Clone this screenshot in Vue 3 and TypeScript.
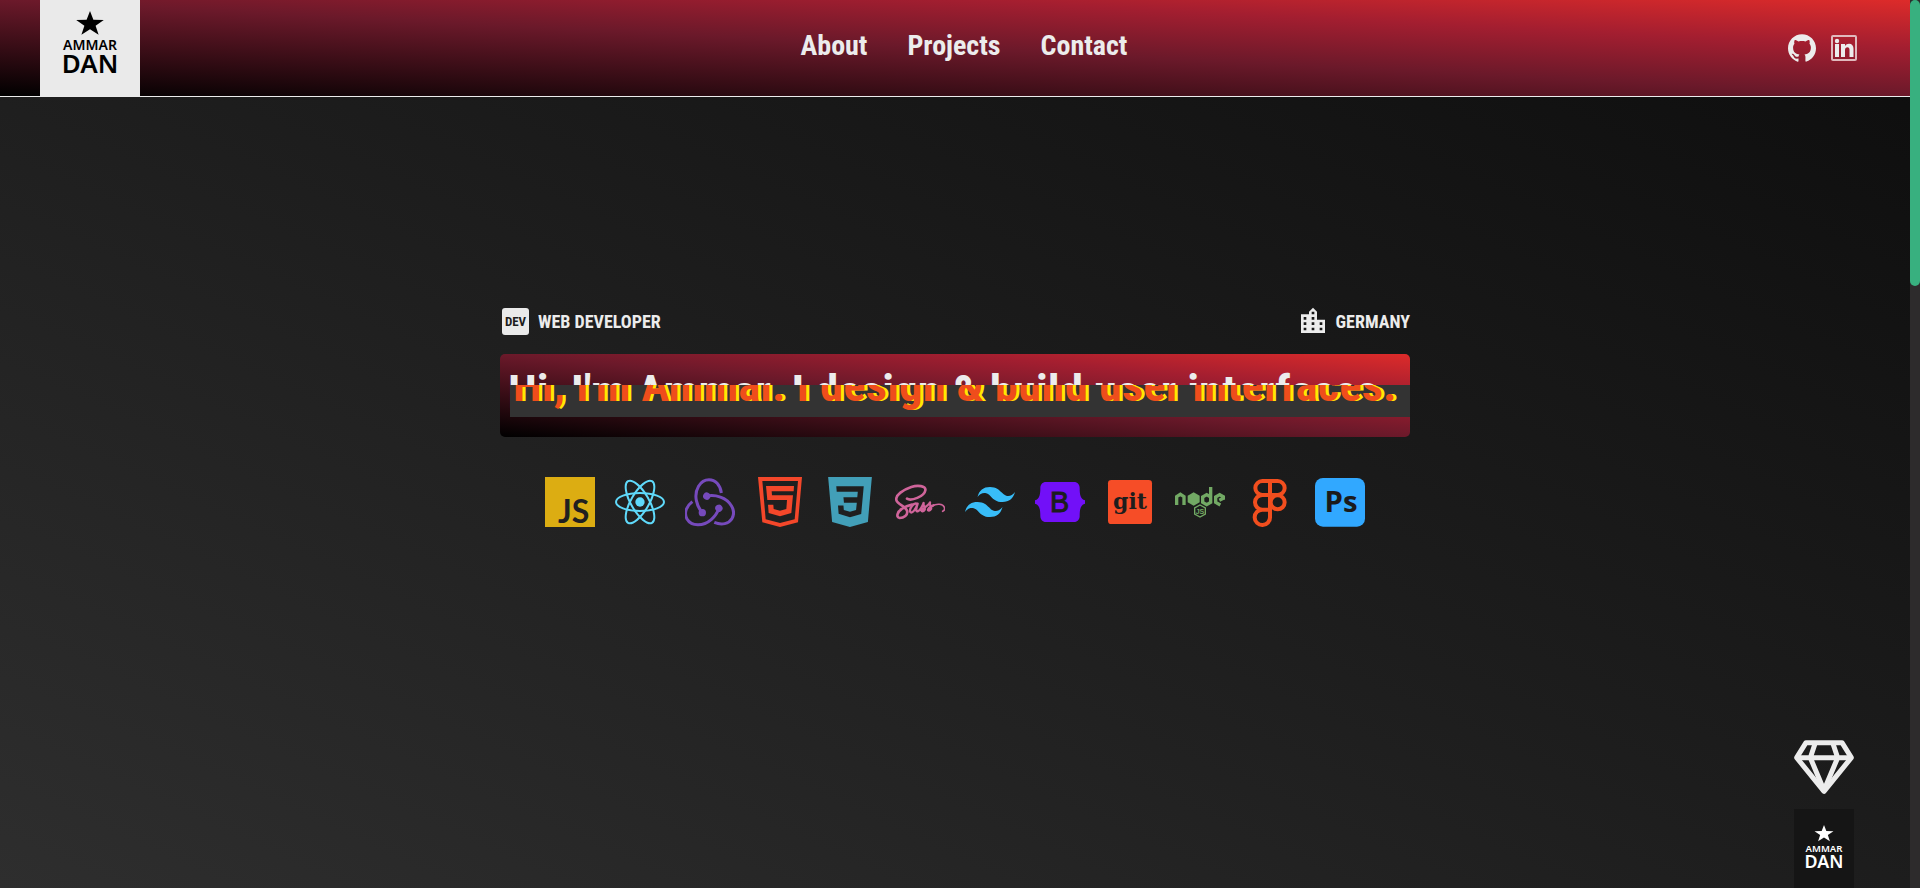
<script setup lang="ts">
import { ref } from 'vue'

interface NavLink {
  label: string
  href: string
}

const links: NavLink[] = [
  { label: 'About', href: '#about' },
  { label: 'Projects', href: '#projects' },
  { label: 'Contact', href: '#contact' },
]

const headline = ref("Hi, I'm Ammar. I design & build user interfaces.")
</script>

<template>
  <div class="page">
    <div class="view">
      <header class="bar">
        <a class="logo" href="#home" aria-label="Home">
          <svg class="logo-mark" viewBox="0 0 54 64">
            <path d="M27 0l3.400 8.800 10.400.2-8.200 5.700 3 9-8.600-5.400-8.600 5.400 3-9L13.200 9l10.400-.2z" />
            <text x="27" y="39" font-size="14">AMMAR</text>
            <text x="27" y="62" font-size="26">DAN</text>
          </svg>
        </a>
        <nav class="nav">
          <a v-for="link in links" :key="link.href" :href="link.href">{{ link.label }}</a>
        </nav>
        <div class="social">
          <a href="#github" aria-label="GitHub">
            <svg class="github" viewBox="0 0 24 24"><path d="M12 .297c-6.63 0-12 5.373-12 12 0 5.303 3.438 9.800 8.205 11.385.6.113.82-.258.82-.577 0-.285-.01-1.040-.015-2.040-3.338.724-4.042-1.610-4.042-1.610C4.422 18.070 3.633 17.700 3.633 17.700c-1.087-.744.084-.729.084-.729 1.205.084 1.838 1.236 1.838 1.236 1.070 1.835 2.809 1.305 3.495.998.108-.776.417-1.305.76-1.605-2.665-.3-5.466-1.332-5.466-5.930 0-1.310.465-2.380 1.235-3.220-.135-.303-.54-1.523.105-3.176 0 0 1.005-.322 3.300 1.230.96-.267 1.980-.399 3-.405 1.020.006 2.040.138 3 .405 2.280-1.552 3.285-1.230 3.285-1.230.645 1.653.24 2.873.12 3.176.765.84 1.230 1.910 1.230 3.220 0 4.610-2.805 5.625-5.475 5.920.42.36.81 1.096.81 2.220 0 1.606-.015 2.896-.015 3.286 0 .315.21.69.825.57C20.565 22.092 24 17.592 24 12.297c0-6.627-5.373-12-12-12" /></svg>
          </a>
          <a href="#linkedin" aria-label="LinkedIn">
            <svg class="linkedin" viewBox="0 0 26 26">
              <rect x="1" y="1" width="24" height="24" rx="1" fill="none" stroke="#e0b9bd" stroke-width="2" />
              <circle cx="6" cy="6" r="2.200" />
              <path d="M4 9h4v13H4zM10 9h4v2c1-1.500 2.300-2.200 4-2.200 3 0 4.500 2 4.500 5V22h-4v-7.200c0-1.700-.7-2.600-2-2.600-1.500 0-2.500 1-2.500 2.700V22h-4z" />
            </svg>
          </a>
        </div>
      </header>

      <main class="hero">
        <div class="intro">
          <div class="meta">
            <span class="tag"><span class="dev" aria-hidden="true">DEV</span>WEB DEVELOPER</span>
            <span class="tag place">
              <svg class="city" viewBox="0 0 24 24" aria-hidden="true"><path d="M15 11V5l-3-3-3 3v2H3v14h18V11h-6m-8 8H5v-2h2v2m0-4H5v-2h2v2m0-4H5V9h2v2m6 8h-2v-2h2v2m0-4h-2v-2h2v2m0-4h-2V9h2v2m0-4h-2V5h2v2m6 12h-2v-2h2v2m0-4h-2v-2h2v2z" /></svg>
              GERMANY
            </span>
          </div>

          <div class="banner">
            <h1 class="title">{{ headline }}</h1>
            <div class="glitch" aria-hidden="true"><span>{{ headline }}</span></div>
          </div>

          <ul class="stack">
            <li>
              <svg viewBox="0 0 150 150" role="img" aria-label="JavaScript">
                <rect width="150" height="150" fill="#dcad12" />
                <text x="39" y="137" font-family="Lato, sans-serif" font-weight="700" font-size="96" fill="#202020">JS</text>
              </svg>
            </li>
            <li>
              <svg viewBox="0 0 150 150" role="img" aria-label="React">
                <g fill="none" stroke="#5fd9fa" stroke-width="6">
                  <ellipse cx="75" cy="75" rx="72" ry="27" />
                  <ellipse cx="75" cy="75" rx="72" ry="27" transform="rotate(60 75 75)" />
                  <ellipse cx="75" cy="75" rx="72" ry="27" transform="rotate(120 75 75)" />
                </g>
                <circle cx="75" cy="75" r="14" fill="#5fd9fa" />
              </svg>
            </li>
            <li>
              <svg viewBox="0 0 150 150" role="img" aria-label="Redux">
                <g v-for="angle in [0, 120, 240]" :key="angle" :transform="`rotate(${angle} 73 86)`">
                  <path fill="none" stroke="#764abc" stroke-width="9" d="M109 48C106 24 91 8 72 8 45 8 28 40 34 70c3 15 9 27 18 37" />
                  <circle cx="52" cy="107" r="11" fill="#764abc" />
                </g>
              </svg>
            </li>
            <li>
              <svg viewBox="0 0 150 150" role="img" aria-label="HTML5">
                <path fill="#f4472a" fill-rule="evenodd" d="M9 0h132l-12 136-54 14-53-14zM22 12l10 115 43 11 44-11 10-115z" />
                <path fill="#f4472a" d="M33 27h84l-1 16H50l1 12h63l-5 53-34 10-34-10-2-25h16l1 13 19 5 19-5 2-27H37z" />
              </svg>
            </li>
            <li>
              <svg viewBox="0 0 24 24" role="img" aria-label="CSS3"><path fill="#429fb8" d="M1.500 0h21l-1.910 21.563L11.977 24l-8.565-2.438L1.500 0zm17.090 4.413L5.410 4.410l.213 2.622 10.125.002-.255 2.716h-6.640l.24 2.573h6.182l-.366 3.523-2.910.804-2.956-.81-.188-2.110h-2.610l.29 3.855L12 19.288l5.373-1.530L18.590 4.414z" /></svg>
            </li>
            <li>
              <svg viewBox="0 0 150 150" role="img" aria-label="Sass">
                <g fill="none" stroke="#cf649a" stroke-linecap="round" stroke-linejoin="round">
                  <path stroke-width="8" d="M36 65c12 8 52-6 55-25 3-14-24-16-42-10C25 38 1 54 4 69c3 14 28 18 32 32 4 13-10 22-22 22-12-2-7-19 6-27 9-6 21-11 31-13" />
                  <path stroke-width="7" d="M65 80c-10-3-21 14-20 23 2 10 16-1 23-23-4 12-7 25 0 23 6-2 14-15 18-25-3 8 6 13 3 20-3 6-10 6-9 2 2-5 21-14 25-24-3 8 6 13 3 20-3 6-10 6-9 2 1-4 9-10 16-13" />
                  <path stroke-width="5" d="M111 87c14-8 33-7 37 4 2 5-1 10-5 12" />
                </g>
              </svg>
            </li>
            <li>
              <svg viewBox="0 0 24 24" role="img" aria-label="Tailwind CSS"><path fill="#38bdf8" d="M12 4.800c-3.200 0-5.200 1.600-6 4.800 1.200-1.600 2.600-2.200 4.200-1.800.913.228 1.565.89 2.288 1.624C13.666 10.618 15.027 12 18 12c3.200 0 5.200-1.600 6-4.800-1.200 1.600-2.600 2.200-4.200 1.800-.913-.228-1.565-.89-2.288-1.624C16.337 6.182 14.976 4.800 12 4.800zM6 12c-3.200 0-5.200 1.600-6 4.800 1.200-1.600 2.600-2.200 4.200-1.800.913.228 1.565.89 2.288 1.624C7.666 17.818 9.027 19.200 12 19.200c3.200 0 5.200-1.600 6-4.800-1.200 1.600-2.600 2.200-4.200 1.800-.913-.228-1.565-.89-2.288-1.624C10.337 13.382 8.976 12 6 12z" /></svg>
            </li>
            <li>
              <svg viewBox="0 0 150 150" role="img" aria-label="Bootstrap">
                <path fill="#7210f8" d="M33 15h84c11 0 17 8 17 18 0 18 2 34 16 37v10c-14 3-16 19-16 37 0 10-6 18-17 18H33c-11 0-17-8-17-18 0-18-2-34-16-37V70c14-3 16-19 16-37 0-10 6-18 17-18z" />
                <text x="45" y="105" font-family="Liberation Sans, sans-serif" font-weight="400" font-size="86" fill="#1d1d1d" stroke="#1d1d1d" stroke-width="3">B</text>
              </svg>
            </li>
            <li>
              <svg viewBox="0 0 150 150" role="img" aria-label="Git">
                <rect x="9" y="9" width="132" height="132" rx="10" fill="#f64d27" />
                <text x="75" y="95" text-anchor="middle" font-family="DejaVu Serif, serif" font-weight="700" font-size="66" fill="#1d1d1d">git</text>
              </svg>
            </li>
            <li>
              <svg viewBox="0 0 150 150" role="img" aria-label="Node.js">
                <g fill="none" stroke="#72a964" stroke-width="10">
                  <path d="M5 84V59l11-7 11 7v25" />
                  <path d="M107 30v46l-12 7-12-7V60l12-7 12 7" />
                  <path d="M145 68v-9l-11-6-12 7v16l14 8M133 70l12-6" />
                </g>
                <path fill="#72a964" d="M56 46l18 10v20L56 86 38 76V56z" />
                <path fill="none" stroke="#72a964" stroke-width="4" d="M75 84l16 9v18l-16 9-16-9V93z" />
                <text x="75" y="110" text-anchor="middle" font-family="Liberation Sans, sans-serif" font-weight="700" font-size="21" fill="#72a964">JS</text>
              </svg>
            </li>
            <li>
              <svg viewBox="0 0 150 150" role="img" aria-label="Figma">
                <g fill="none" stroke="#f24e1e" stroke-width="12">
                  <path d="M75 12H52a21 21 0 0 0 0 42h46a21 21 0 0 0 0-42zM75 12v108a23 23 0 1 1-23-22h23M75 54H52a22 22 0 0 0 0 44" />
                  <circle cx="98" cy="76" r="21" />
                </g>
              </svg>
            </li>
            <li>
              <svg viewBox="0 0 150 150" role="img" aria-label="Photoshop">
                <rect y="3" width="150" height="146" rx="24" fill="#31a8ff" />
                <text x="78" y="104" text-anchor="middle" font-family="Open Sans, sans-serif" font-weight="700" font-size="88" fill="#1b1b1b">Ps</text>
              </svg>
            </li>
          </ul>
        </div>
      </main>

      <aside class="float">
        <a href="#skills" aria-label="Skills">
          <svg class="gem" viewBox="0 0 180 162">
            <g fill="none" stroke="#ececec" stroke-width="15" stroke-linejoin="round">
              <path d="M36 8h108l28 45-82 101L8 53z" />
              <path d="M8 53h164M64 8L49 53l41 98 41-98-15-45" />
            </g>
          </svg>
        </a>
        <a class="badge" href="#home" aria-label="Back to top">
          <svg class="badge-mark" viewBox="0 0 54 64">
            <path d="M27 0l3.400 8.800 10.400.2-8.200 5.700 3 9-8.600-5.400-8.600 5.400 3-9L13.200 9l10.400-.2z" />
            <text x="27" y="39" font-size="14">AMMAR</text>
            <text x="27" y="62" font-size="26">DAN</text>
          </svg>
        </a>
      </aside>
    </div>

    <div class="track" aria-hidden="true"><div class="thumb"></div></div>
  </div>
</template>

<style>
html,
body {
  margin: 0;
  background: #1c1c1c;
}
</style>

<style scoped>
.page {
  display: flex;
  min-height: 100vh;
  color: #ececec;
  font-family: "Liberation Sans Narrow", "Roboto Condensed", Roboto, sans-serif;
  font-weight: 700;
}
a {
  color: inherit;
  text-decoration: none;
}
svg {
  display: block;
  fill: currentColor;
}
.view {
  position: relative;
  flex: 1;
  display: flex;
  flex-direction: column;
  background: linear-gradient(to bottom left, #0d0d0d, #1d1d1d 50%, #2e2e2e);
}
.bar {
  display: flex;
  justify-content: space-between;
  align-items: center;
  height: 96px;
  padding: 0 53px 0 40px;
  border-bottom: 1px solid #ececec;
  background: linear-gradient(to top right, #000, #6b192a 50%, #a31e30 75%, #dd2b2a);
}
.logo {
  display: flex;
  justify-content: center;
  align-items: center;
  width: 100px;
  height: 100%;
  box-sizing: border-box;
  padding-bottom: 10px;
  background: #eaeaea;
  color: #000;
}
.logo-mark,
.badge-mark {
  overflow: visible;
  font-family: "Noto Sans", "Open Sans", sans-serif;
  font-weight: 600;
  text-anchor: middle;
}
.logo-mark {
  width: 54px;
  height: 64px;
}
.nav {
  display: flex;
  gap: 40px;
  font-size: 28px;
  line-height: 36px;
  padding-bottom: 4px;
}
.social {
  display: flex;
  align-items: center;
  gap: 15px;
}
.github {
  width: 28px;
  height: 28px;
}
.linkedin {
  width: 26px;
  height: 26px;
}
.hero {
  display: flex;
  justify-content: center;
  padding-top: 208px;
}
.intro {
  width: 910px;
  max-width: 100%;
}
.meta {
  display: flex;
  justify-content: space-between;
  align-items: center;
  height: 32px;
  padding-left: 2px;
  margin-bottom: 17px;
  font-size: 18px;
}
.tag {
  display: flex;
  align-items: center;
  gap: 9px;
}
.place {
  gap: 7px;
}
.dev {
  width: 27px;
  border-radius: 3px;
  background: #eaeaea;
  color: #1c1c1c;
  font-size: 13px;
  line-height: 27px;
  text-align: center;
}
.city {
  width: 32px;
  height: 32px;
}
.banner {
  position: relative;
  height: 83px;
  border-radius: 5px;
  overflow: hidden;
  background: linear-gradient(to top right, #000, #6b192a 50%, #a31e30 75%, #dd2b2a);
}
.title {
  margin: 0;
  padding: 10px 0 0 8px;
  font-size: 47px;
  line-height: 56px;
  white-space: nowrap;
}
.glitch {
  position: absolute;
  top: 31px;
  left: 10px;
  right: 0;
  height: 32px;
  overflow: hidden;
  display: flex;
  align-items: flex-end;
  background: #333;
  color: #ef4d1c;
  text-shadow: 3px 0 #ffea00;
  font-size: 47px;
  line-height: 56px;
  white-space: nowrap;
}
.glitch span {
  padding: 0 0 4px 3px;
}
.stack {
  display: flex;
  justify-content: center;
  gap: 20px;
  margin: 40px 0 0;
  padding: 0;
  list-style: none;
}
.stack svg {
  width: 50px;
  height: 50px;
}
.float {
  position: fixed;
  right: 66px;
  bottom: 0;
  display: flex;
  flex-direction: column;
  gap: 15px;
}
.gem {
  width: 60px;
  height: 54px;
}
.badge {
  display: flex;
  justify-content: center;
  box-sizing: border-box;
  width: 60px;
  padding: 16px 0 19px;
  background: #151515;
  color: #fff;
}
.badge-mark {
  width: 38px;
  height: 44px;
}
.track {
  width: 10px;
  background: #2d2b2c;
}
.thumb {
  height: 286px;
  border-radius: 5px;
  background: #38b07f;
}
</style>
